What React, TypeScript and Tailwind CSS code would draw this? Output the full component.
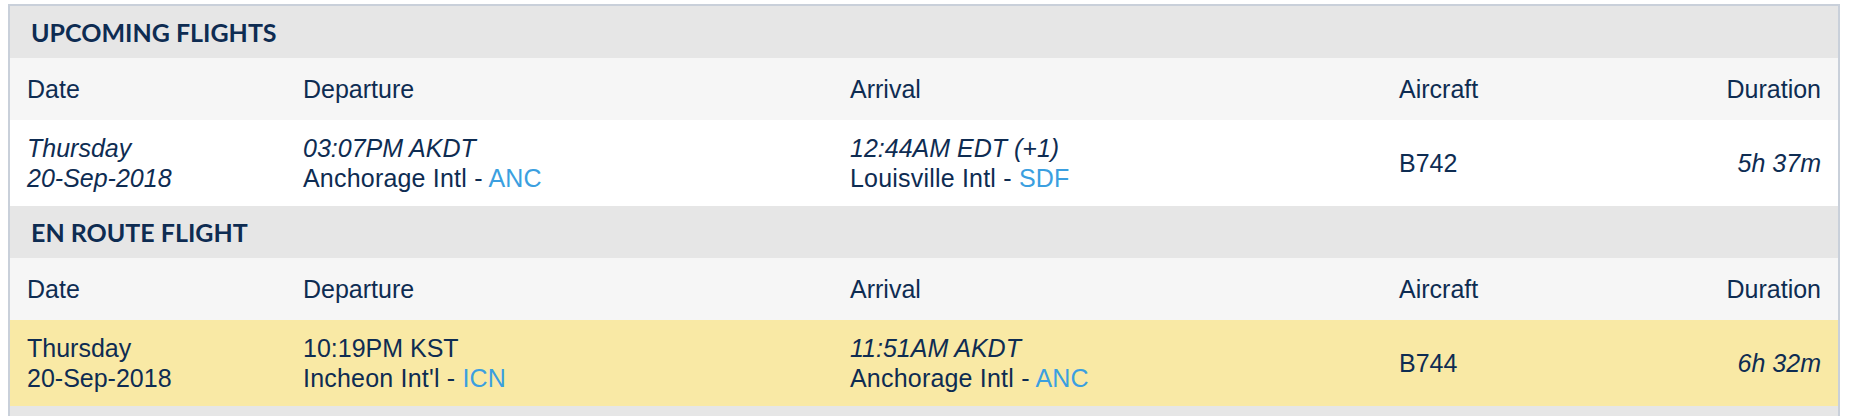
import React from "react";

type Row = {
  day: string;
  date: string;
  dateItalic: boolean;
  depTime: string;
  depItalic: boolean;
  depName: string;
  depCode: string;
  arrTime: string;
  arrItalic: boolean;
  arrName: string;
  arrCode: string;
  aircraft: string;
  duration: string;
  highlight: boolean;
};

const sections: { title: string; row: Row }[] = [
  {
    title: "UPCOMING FLIGHTS",
    row: {
      day: "Thursday",
      date: "20-Sep-2018",
      dateItalic: true,
      depTime: "03:07PM AKDT",
      depItalic: true,
      depName: "Anchorage Intl",
      depCode: "ANC",
      arrTime: "12:44AM EDT (+1)",
      arrItalic: true,
      arrName: "Louisville Intl",
      arrCode: "SDF",
      aircraft: "B742",
      duration: "5h 37m",
      highlight: false,
    },
  },
  {
    title: "EN ROUTE FLIGHT",
    row: {
      day: "Thursday",
      date: "20-Sep-2018",
      dateItalic: false,
      depTime: "10:19PM KST",
      depItalic: false,
      depName: "Incheon Int'l",
      depCode: "ICN",
      arrTime: "11:51AM AKDT",
      arrItalic: true,
      arrName: "Anchorage Intl",
      arrCode: "ANC",
      aircraft: "B744",
      duration: "6h 32m",
      highlight: true,
    },
  },
];

const grid = "grid grid-cols-[276px_547px_549px_1fr_auto]";

function Section({ title, row }: { title: string; row: Row }) {
  return (
    <div>
      <div className="h-[52px] bg-[#e6e6e6] flex items-center pl-[21px]">
        <span
          className="text-[25px] font-bold text-[#0e2c52] leading-none pt-[1px]"
          style={{ fontFamily: "Lato, 'Open Sans', sans-serif" }}
        >
          {title}
        </span>
      </div>
      <div className={`${grid} h-[62px] bg-[#f6f6f6] items-center`}>
        <div className="px-[17px]">Date</div>
        <div className="px-[17px]">Departure</div>
        <div className="px-[17px]">Arrival</div>
        <div className="px-[17px]">Aircraft</div>
        <div className="px-[17px] text-right">Duration</div>
      </div>
      <div
        className={`${grid} h-[86px] items-center ${
          row.highlight ? "bg-[#f9e9a5]" : "bg-white"
        }`}
      >
        <div className={`px-[17px] ${row.dateItalic ? "italic" : ""}`}>
          <div>{row.day}</div>
          <div>{row.date}</div>
        </div>
        <div className="px-[17px]">
          <div className={row.depItalic ? "italic" : ""}>{row.depTime}</div>
          <div className="tracking-[0.2px]">
            {row.depName} - <span className="text-[#3b9fe0]">{row.depCode}</span>
          </div>
        </div>
        <div className="px-[17px]">
          <div className={row.arrItalic ? "italic" : ""}>{row.arrTime}</div>
          <div className="tracking-[0.2px]">
            {row.arrName} - <span className="text-[#3b9fe0]">{row.arrCode}</span>
          </div>
        </div>
        <div className="px-[17px]">{row.aircraft}</div>
        <div className="px-[17px] text-right italic">{row.duration}</div>
      </div>
    </div>
  );
}

export default function App() {
  return (
    <div className="w-[1856px] h-[416px] overflow-hidden bg-white">
      <div
        className="mt-[4px] ml-[8px] w-[1832px] border-2 border-[#c9d0da] text-[25px] leading-[30px] text-[#0e2c52]"
        style={{ fontFamily: "'Liberation Sans', Arial, sans-serif" }}
      >
        {sections.map((s) => (
          <Section key={s.title} title={s.title} row={s.row} />
        ))}
        <div className="h-[52px] bg-[#e6e6e6]" />
      </div>
    </div>
  );
}
